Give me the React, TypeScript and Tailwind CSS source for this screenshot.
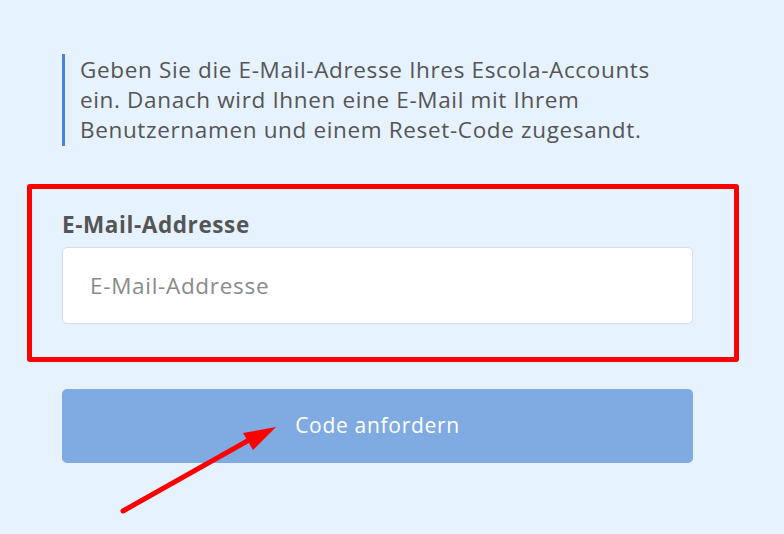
import React from "react";

export default function App() {
  return (
    <div
      className="relative w-[784px] h-[534px] overflow-hidden bg-[#e6f2fe]"
      style={{ fontFamily: "'Open Sans', 'Noto Sans', sans-serif" }}
    >
      <div className="w-[631px] ml-[62px] pt-[54px] flex flex-col">
        <div className="border-l-[3px] border-[#4a80e0] pl-[15px] py-[1px] text-[22.5px] tracking-[0.65px] leading-[30px] text-[#555555] h-[92px] whitespace-nowrap">
          Geben Sie die E-Mail-Adresse Ihres Escola-Accounts
          <br />
          ein. Danach wird Ihnen eine E-Mail mit Ihrem
          <br />
          Benutzernamen und einem Reset-Code zugesandt.
        </div>
        <div className="relative mt-[64px] flex flex-col">
          <label className="text-[22.5px] tracking-[0.6px] leading-[30px] font-bold text-[#555555]">E-Mail-Addresse</label>
          <input
            className="mt-[7px] h-[77px] w-full rounded-[5px] border border-[#d4dde8] bg-white px-[27px] text-[22.5px] tracking-[0.7px] text-[#555] placeholder:text-[#8a8a8a] outline-none"
            placeholder="E-Mail-Addresse"
          />
          <div className="absolute left-[-35px] top-[-26px] w-[712px] h-[178px] border-[5px] border-[#ff0000] rounded-[3px] pointer-events-none" />
        </div>
        <button className="mt-[65px] h-[74px] w-full rounded-[5px] bg-[#80abe2] text-white text-[21px] tracking-[0.7px]">
          Code anfordern
        </button>
      </div>
      <svg className="absolute left-0 top-0" width="784" height="534" viewBox="0 0 784 534">
        <line x1="123" y1="511" x2="258" y2="435" stroke="#ff0000" strokeWidth="5" strokeLinecap="round" />
        <polygon points="276,427 253,450 243,433" fill="#ff0000" />
      </svg>
    </div>
  );
}
